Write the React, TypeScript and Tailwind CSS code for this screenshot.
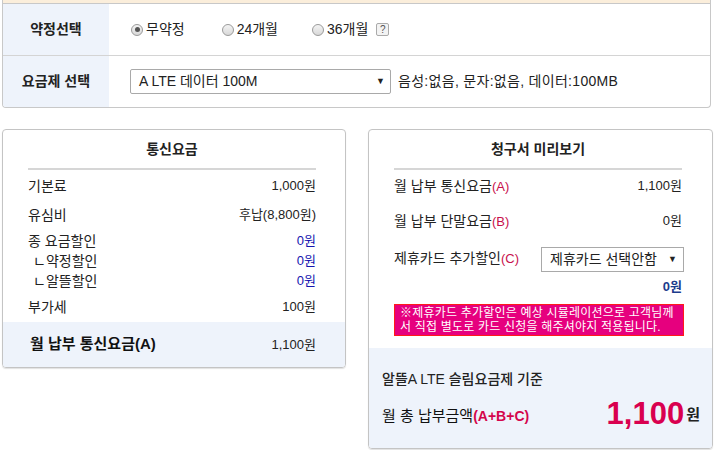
import React from "react";

const font = {
  fontFamily: '"Liberation Sans", "Noto Sans CJK KR", sans-serif',
};

function Radio({ checked, label }: { checked?: boolean; label: string }) {
  return (
    <label className="flex items-center gap-[3px] text-[14px] text-[#222]">
      <span className="flex h-[12px] w-[12px] items-center justify-center rounded-full border border-[#9a9a9a] bg-gradient-to-b from-[#f4f4f4] to-[#d8d8d8]">
        {checked && <span className="h-[5px] w-[5px] rounded-full bg-[#555]" />}
      </span>
      {label}
    </label>
  );
}

function Row({
  label,
  value,
  blue,
  indent,
  className = "",
}: {
  label: string;
  value: string;
  blue?: boolean;
  indent?: boolean;
  className?: string;
}) {
  return (
    <div className={`flex items-center justify-between text-[14px] text-[#222] ${className}`}>
      <span className={indent ? "pl-[5px]" : ""}>{label}</span>
      <span className={`text-[13px] ${blue ? "text-[#1515b0]" : ""}`}>{value}</span>
    </div>
  );
}

export default function App() {
  return (
    <div style={font} className="h-[450px] w-[720px] overflow-hidden bg-white">
      {/* 약정 / 요금제 선택 */}
      <div className="ml-[2px] w-[709px] overflow-hidden rounded-b-[4px] border-x border-b border-[#c8c8c8]">
        <div className="h-[4px] border-b border-[#c8c8c8] bg-[#fbeedb]" />
        <div className="flex h-[52px] border-b border-[#d4d4d4]">
          <div className="flex w-[106px] items-center justify-center bg-[#eef3fb] text-[14px] font-bold text-[#222]">
            약정선택
          </div>
          <div className="flex items-center pl-[22px]">
            <Radio checked label="무약정" />
            <span className="ml-[37px]">
              <Radio label="24개월" />
            </span>
            <span className="ml-[34px]">
              <Radio label="36개월" />
            </span>
            <span className="ml-[8px] flex h-[13px] w-[13px] items-center justify-center rounded-[2px] border border-[#aaa] bg-[#f3f3f3] text-[10px] leading-none text-[#555]">
              ?
            </span>
          </div>
        </div>
        <div className="flex h-[51px]">
          <div className="flex w-[106px] items-center justify-center bg-[#eef3fb] text-[14px] font-bold text-[#222]">
            요금제 선택
          </div>
          <div className="flex items-center pl-[21px]">
            <div className="flex h-[25px] w-[261px] items-center justify-between rounded-[2px] border border-[#a9a9a9] bg-white pl-[8px] pr-[5px] text-[14px] text-[#222]">
              <span>A LTE 데이터 100M</span>
              <span className="text-[9px]">▼</span>
            </div>
            <span className="ml-[7px] text-[14px] tracking-[0.3px] text-[#222]">음성:없음, 문자:없음, 데이터:100MB</span>
          </div>
        </div>
      </div>

      <div className="mt-[21px] flex items-start gap-[22px] pl-[2px]">
        {/* 통신요금 */}
        <div className="w-[344px] overflow-hidden rounded-[4px] border border-[#c4c4c4] shadow-[0_1px_1px_rgba(0,0,0,0.12)]">
          <div className="pl-[25px] pr-[29px]">
            <div className="flex h-[40px] items-center justify-center border-b-2 border-[#d6d6d6] text-[14px] font-bold text-[#222]">
              통신요금
            </div>
            <Row label="기본료" value="1,000원" className="mt-[7px] h-[18px]" />
            <Row label="유심비" value="후납(8,800원)" className="mt-[11px] h-[18px]" />
            <Row label="종 요금할인" value="0원" blue className="mt-[8px] h-[18px]" />
            <Row label="ㄴ약정할인" value="0원" blue indent className="mt-[2px] h-[18px]" />
            <Row label="ㄴ알뜰할인" value="0원" blue indent className="mt-[2px] h-[18px]" />
            <Row label="부가세" value="100원" className="mt-[8px] h-[18px]" />
          </div>
          <div className="mt-[6px] flex h-[45px] items-center justify-between bg-[#eef3fb] pl-[27px] pr-[29px]">
            <span className="text-[15px] font-bold text-[#111]">월 납부 통신요금(A)</span>
            <span className="text-[13px] text-[#222]">1,100원</span>
          </div>
        </div>

        {/* 청구서 미리보기 */}
        <div className="w-[345px] overflow-hidden rounded-[4px] border border-[#c4c4c4] shadow-[0_1px_1px_rgba(0,0,0,0.12)]">
          <div className="pl-[25px] pr-[30px]">
            <div className="flex h-[40px] items-center justify-center border-b-2 border-[#d6d6d6] text-[14px] font-bold text-[#222]">
              청구서 미리보기
            </div>
            <div className="mt-[7px] flex h-[18px] items-center justify-between text-[14px] text-[#222]">
              <span>
                월 납부 통신요금<span className="text-[13px] text-[#c8104c]">(A)</span>
              </span>
              <span className="text-[13px]">1,100원</span>
            </div>
            <div className="mt-[17px] flex h-[18px] items-center justify-between text-[14px] text-[#222]">
              <span>
                월 납부 단말요금<span className="text-[13px] text-[#c8104c]">(B)</span>
              </span>
              <span className="text-[13px]">0원</span>
            </div>
            <div className="mt-[17px] flex items-start justify-between text-[14px] text-[#222]">
              <span className="mt-[1px]">
                제휴카드 추가할인<span className="text-[13px] text-[#c8104c]">(C)</span>
              </span>
              <div className="mr-[-2px] flex h-[25px] w-[143px] items-center justify-between border border-[#a9a9a9] bg-white pl-[8px] pr-[6px] text-[14px]">
                <span>제휴카드 선택안함</span>
                <span className="text-[9px]">▼</span>
              </div>
            </div>
            <div className="mt-[6px] flex h-[18px] items-center justify-end text-[13px] font-bold text-[#1c3c8c]">
              0원
            </div>
            <div className="mr-[-2px] mt-[8px] border border-[#ff1a1a] bg-[#e6007e] px-[5px] py-[1px] text-[12px] leading-[14px] tracking-[0.2px] text-white">
              ※제휴카드 추가할인은 예상 시뮬레이션으로 고객님께서 직접 별도로 카드 신청을 해주셔야지 적용됩니다.
            </div>
          </div>
          <div className="mt-[12px] h-[100px] bg-[#eef3fb] pl-[13px] pr-[12px] pt-[21px]">
            <div className="text-[14px] font-medium text-[#222]">알뜰A LTE 슬림요금제 기준</div>
            <div className="mt-[5px] flex items-end justify-between">
              <span className="mb-[6px] text-[15px] text-[#111]">
                월 총 납부금액<span className="text-[14px] font-bold text-[#d4064c]">(A+B+C)</span>
              </span>
              <span className="flex items-end">
                <span className="text-[31px] font-bold leading-[38px] text-[#d9004f]">1,100</span>
                <span className="mb-[7px] ml-[2px] text-[15px] font-bold text-[#222]">원</span>
              </span>
            </div>
          </div>
        </div>
      </div>
    </div>
  );
}
